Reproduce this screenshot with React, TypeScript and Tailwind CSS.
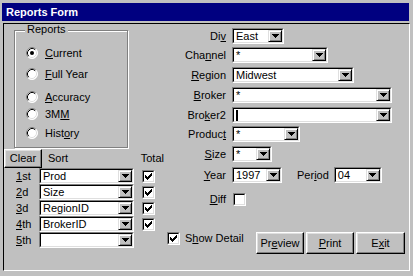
import React from "react";

const U = ({ children }: { children: React.ReactNode }) => (
  <span className="underline underline-offset-1 decoration-1">{children}</span>
);

function Arrow() {
  return (
    <svg width="7" height="4" viewBox="0 0 7 4" shapeRendering="crispEdges">
      <path d="M0 0h7v1h-1v1h-1v1h-1v1h-1v-1h-1v-1h-1v-1h-1z" fill="#000" />
    </svg>
  );
}

function CheckMark() {
  const px: [number, number][] = [
    [6, 0], [5, 1], [6, 1], [0, 2], [4, 2], [5, 2], [6, 2],
    [0, 3], [1, 3], [3, 3], [4, 3], [5, 3],
    [0, 4], [1, 4], [2, 4], [3, 4], [4, 4],
    [1, 5], [2, 5], [3, 5], [2, 6],
  ];
  return (
    <svg width="7" height="7" viewBox="0 0 7 7" shapeRendering="crispEdges">
      {px.map(([x, y], i) => (
        <rect key={i} x={x} y={y} width="1" height="1" fill="#000" />
      ))}
    </svg>
  );
}

function Combo({ w, value, caret }: { w: string; value?: string; caret?: boolean }) {
  return (
    <div className={`${w} h-[16px] shrink-0 border border-t-[#808080] border-l-[#808080] border-b-white border-r-white`}>
      <div className="h-full flex bg-white border border-t-black border-l-black border-b-[#dfdfdf] border-r-[#dfdfdf]">
        <div className="flex-1 flex items-center pl-[2px] leading-none overflow-hidden whitespace-nowrap">
          {caret ? <span className="w-[2px] h-[11px] bg-black" /> : value}
        </div>
        <div className="w-[14px] h-full shrink-0 flex items-center justify-center bg-[#c0c0c0] border border-t-[#dfdfdf] border-l-[#dfdfdf] border-b-black border-r-black shadow-[inset_1px_1px_0_#fff,inset_-1px_-1px_0_#808080]">
          <Arrow />
        </div>
      </div>
    </div>
  );
}

function Check({ checked }: { checked?: boolean }) {
  return (
    <div className="w-[13px] h-[13px] shrink-0 border border-t-[#808080] border-l-[#808080] border-b-white border-r-white">
      <div className="h-full bg-white border border-t-black border-l-black border-b-[#dfdfdf] border-r-[#dfdfdf] flex items-center justify-center">
        {checked && <CheckMark />}
      </div>
    </div>
  );
}

function Radio({ checked }: { checked?: boolean }) {
  return (
    <svg width="12" height="12" viewBox="0 0 12 12" className="shrink-0">
      <circle cx="6" cy="6" r="5.5" fill="#fff" />
      <path d="M2.11 9.89 A5.5 5.5 0 0 1 9.89 2.11" stroke="#808080" fill="none" />
      <path d="M9.89 2.11 A5.5 5.5 0 0 1 2.11 9.89" stroke="#fff" fill="none" />
      <path d="M2.82 9.18 A4.5 4.5 0 0 1 9.18 2.82" stroke="#000" fill="none" />
      <path d="M9.18 2.82 A4.5 4.5 0 0 1 2.82 9.18" stroke="#dfdfdf" fill="none" />
      {checked && <circle cx="6" cy="6" r="2" fill="#000" />}
    </svg>
  );
}

function Btn({ className, children }: { className: string; children: React.ReactNode }) {
  return (
    <div
      className={`${className} shrink-0 flex items-center justify-center bg-[#c0c0c0] border border-t-white border-l-white border-b-black border-r-black shadow-[inset_-1px_-1px_0_#808080,inset_1px_1px_0_#dfdfdf]`}
    >
      {children}
    </div>
  );
}

function Field({ label, children, className }: { label: React.ReactNode; children: React.ReactNode; className: string }) {
  return (
    <div className={`${className} flex items-center h-[16px]`}>
      <div className="w-[62px] text-right leading-none">{label}</div>
      <div className="ml-[6px] flex items-center">{children}</div>
    </div>
  );
}

function SortRow({ n, value }: { n: React.ReactNode; value: string | null }) {
  return (
    <div className="h-[16px] flex items-center">
      <div className="w-[35px] pl-[12px] leading-none">{n}</div>
      <Combo w="w-[95px]" value={value ?? ""} />
      {value !== null && value !== "" ? (
        <div className="ml-[8px]">
          <Check checked />
        </div>
      ) : null}
    </div>
  );
}

export default function App() {
  return (
    <div className="w-[413px] h-[276px] bg-[#c0c0c0] pt-[3px] pl-[2px] pr-[4px] font-['Liberation_Sans',Arial,sans-serif] text-[11px] text-black overflow-hidden">
      <div className="h-[18px] bg-[#000080] text-white font-bold pl-[4px] flex items-center leading-none">
        Reports Form
      </div>
      <div className="mt-[2px] ml-[1px] w-[407px] h-[248px] border border-t-black border-l-black border-b-white border-r-white flex">
        {/* Left column */}
        <div className="w-[160px] shrink-0 flex flex-col">
          <div className="relative mt-[6px] ml-[10px] w-[114px] h-[118px] border border-[#808080] shadow-[inset_1px_1px_0_#fff,1px_1px_0_#fff] pl-[11px]">
            <div className="absolute left-[10px] top-[-7px] px-[2px] bg-[#c0c0c0] leading-none">Reports</div>
            <div className="mt-[16px] flex items-center h-[12px]">
              <Radio checked />
              <span className="ml-[7px] leading-none"><U>C</U>urrent</span>
            </div>
            <div className="mt-[9px] flex items-center h-[12px]">
              <Radio />
              <span className="ml-[7px] leading-none"><U>F</U>ull Year</span>
            </div>
            <div className="mt-[11px] flex items-center h-[12px]">
              <Radio />
              <span className="ml-[7px] leading-none"><U>A</U>ccuracy</span>
            </div>
            <div className="mt-[5px] flex items-center h-[12px]">
              <Radio />
              <span className="ml-[7px] leading-none">3M<U>M</U></span>
            </div>
            <div className="mt-[7px] flex items-center h-[12px]">
              <Radio />
              <span className="ml-[7px] leading-none">Hist<U>o</U>ry</span>
            </div>
          </div>
          <div className="mt-[1px] h-[19px] flex items-center">
            <Btn className="w-[38px] h-[19px]">Clear</Btn>
            <div className="ml-[6px] w-[94px] leading-none">Sort</div>
            <div className="leading-none">Total</div>
          </div>
          <SortRow n={<><U>1</U>st</>} value="Prod" />
          <SortRow n={<><U>2</U>d</>} value="Size" />
          <SortRow n={<><U>3</U>d</>} value="RegionID" />
          <SortRow n={<><U>4</U>th</>} value="BrokerID" />
          <SortRow n={<><U>5</U>th</>} value={null} />
        </div>

        {/* Right column */}
        <div className="flex-1 flex flex-col">
          <Field className="mt-[4px]" label={<>Di<U>v</U></>}>
            <Combo w="w-[52px]" value="East" />
          </Field>
          <Field className="mt-[3px]" label={<>Cha<U>n</U>nel</>}>
            <Combo w="w-[96px]" value="*" />
          </Field>
          <Field className="mt-[4px]" label={<><U>R</U>egion</>}>
            <Combo w="w-[122px]" value="Midwest" />
          </Field>
          <Field className="mt-[4px]" label={<><U>B</U>roker</>}>
            <Combo w="w-[160px]" value="*" />
          </Field>
          <Field className="mt-[4px]" label={<>Bro<U>k</U>er2</>}>
            <Combo w="w-[160px]" caret />
          </Field>
          <Field className="mt-[3px]" label={<>Produc<U>t</U></>}>
            <Combo w="w-[68px]" value="*" />
          </Field>
          <Field className="mt-[4px]" label={<><U>S</U>ize</>}>
            <Combo w="w-[40px]" value="*" />
          </Field>
          <Field className="mt-[5px]" label={<><U>Y</U>ear</>}>
            <Combo w="w-[50px]" value="1997" />
            <span className="ml-[15px] leading-none">Per<U>i</U>od</span>
            <span className="ml-[5px]">
              <Combo w="w-[48px]" value="04" />
            </span>
          </Field>
          <div className="mt-[10px] flex items-center h-[13px]">
            <div className="w-[62px] text-right leading-none"><U>D</U>iff</div>
            <div className="ml-[7px]">
              <Check />
            </div>
          </div>
          <div className="mt-[26px] flex items-start">
            <div className="w-[92px] shrink-0 flex items-center h-[13px] pl-[3px]">
              <Check checked />
              <span className="ml-[5px] leading-none">S<U>h</U>ow Detail</span>
            </div>
            <div className="flex gap-[2px]">
              <Btn className="w-[48px] h-[22px]">Pr<U>e</U>view</Btn>
              <Btn className="w-[48px] h-[22px]"><U>P</U>rint</Btn>
              <Btn className="w-[49px] h-[22px]">E<U>x</U>it</Btn>
            </div>
          </div>
        </div>
      </div>
    </div>
  );
}
